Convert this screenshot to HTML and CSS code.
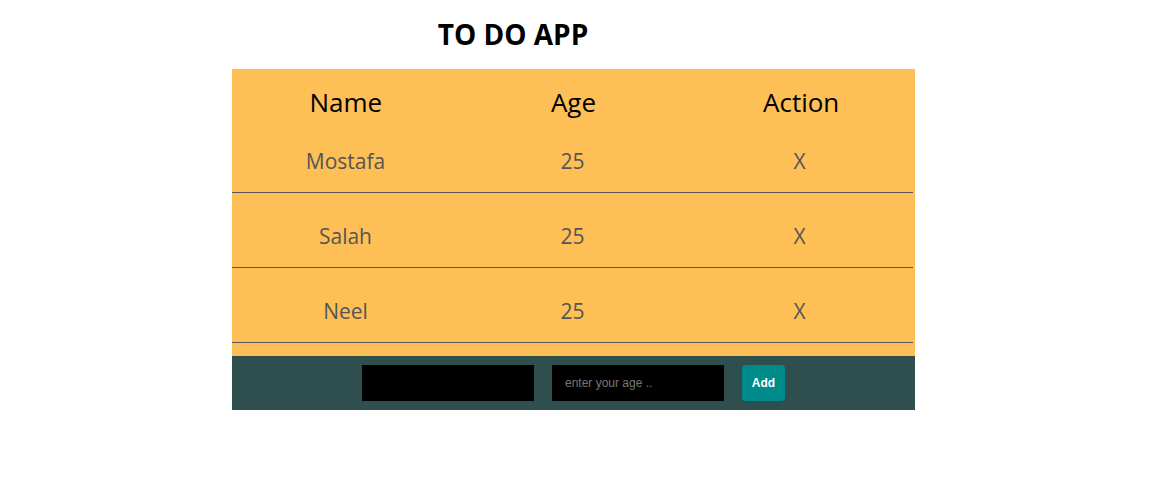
FILE: index.html
```html
<!DOCTYPE html>
<html>
<head>
<meta charset="utf-8">
<link rel="stylesheet" href="styles.css">
</head>
<body>
<div class="app">
  <h1 class="title">TO DO APP</h1>
  <div class="board">
    <div class="row head">
      <div class="cell">Name</div>
      <div class="cell">Age</div>
      <div class="cell">Action</div>
    </div>
    <div class="row item">
      <div class="cell">Mostafa</div>
      <div class="cell">25</div>
      <div class="cell">X</div>
    </div>
    <div class="row item">
      <div class="cell">Salah</div>
      <div class="cell">25</div>
      <div class="cell">X</div>
    </div>
    <div class="row item">
      <div class="cell">Neel</div>
      <div class="cell">25</div>
      <div class="cell">X</div>
    </div>
  </div>
  <form class="add-bar">
    <input class="field" type="text">
    <input class="field" type="text" placeholder="enter your age ..">
    <button class="add-btn" type="button">Add</button>
  </form>
</div>
</body>
</html>
```
FILE: styles.css
```css
* { box-sizing: border-box; }
body {
  margin: 0;
  background: #fff;
  font-family: "Open Sans", "Noto Sans", sans-serif;
}
.app {
  width: 683px;
  margin-left: 232px;
}
.title {
  margin: 17px 0 18px;
  padding-right: 121px;
  text-align: center;
  font-size: 28px;
  line-height: 34px;
  font-weight: 700;
  color: #000;
}
.board {
  background: #febf56;
  padding-bottom: 13px;
}
.row {
  display: grid;
  grid-template-columns: 1fr 1fr 1fr;
  text-align: center;
}
.head {
  padding-top: 18px;
  font-size: 26px;
  line-height: 31px;
  color: #000;
}
.item {
  height: 75px;
  padding-top: 28px;
  font-size: 21px;
  line-height: 30px;
  color: #555;
  border-bottom: 1px solid #555;
  margin-right: 2px;
}
.add-bar {
  margin: 0;
  height: 54px;
  background: #2f4f4f;
  display: flex;
  align-items: center;
  justify-content: center;
  gap: 18px;
}
.field {
  width: 172px;
  height: 36px;
  background: #000;
  border: none;
  padding: 0 13px;
  color: #fff;
  font-family: Arial, "Liberation Sans", sans-serif;
  font-size: 12px;
  outline: none;
}
.field::placeholder { color: #777; }
.add-btn {
  width: 43px;
  height: 36px;
  border: none;
  border-radius: 4px;
  background: #008b8b;
  color: #fff;
  font-family: Arial, "Liberation Sans", sans-serif;
  font-weight: 700;
  font-size: 12px;
  padding: 0;
}
```
